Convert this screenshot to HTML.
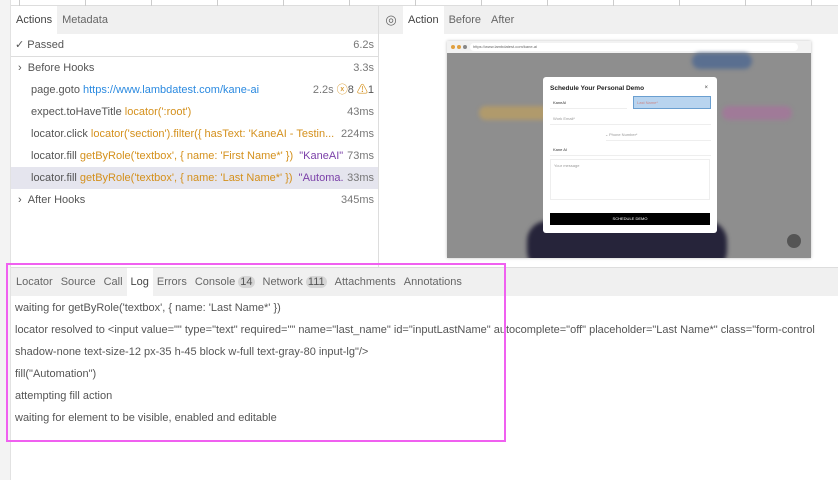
<!DOCTYPE html>
<html><head><meta charset="utf-8"><style>
*{box-sizing:border-box;margin:0;padding:0}
body{width:838px;height:480px;overflow:hidden;background:#fff;font-family:"Liberation Sans",sans-serif;font-size:11px;color:#555;position:relative}
.abs{position:absolute}
.rail{left:0;top:0;width:11px;height:480px;background:#f3f3f3;border-right:1px solid #e2e2e2}
.top{left:11px;top:0;width:827px;height:6px;border-bottom:1px solid #ddd;background:#fff}
.tick{position:absolute;top:0;width:1px;height:6px;background:#ccc}
.tabs{background:#f0f0f0;height:28px;display:flex;align-items:center}
.tab{padding:0 5px;height:28px;line-height:28px;color:#666}
.btabs .tab{padding:0 4px}
.tab.sel{background:#fff;color:#444}
.row{position:absolute;left:11px;width:367px;height:22px;line-height:22px;white-space:nowrap}
.row .t{position:absolute;right:4px;top:0;color:#777}
.o{color:#d4901c}.b{color:#2b8ae0}.p{color:#7a3fa8}
.log{position:absolute;left:15px;font-size:11px;color:#555;white-space:nowrap}
.badge{background:#d6d6d6;border-radius:7px;padding:0 2px;color:#555}
</style></head><body>
<div class="abs rail"></div>
<div class="abs top">
<div class="tick" style="left:8px"></div><div class="tick" style="left:74px"></div><div class="tick" style="left:140px"></div><div class="tick" style="left:206px"></div><div class="tick" style="left:272px"></div><div class="tick" style="left:338px"></div><div class="tick" style="left:404px"></div><div class="tick" style="left:470px"></div><div class="tick" style="left:536px"></div><div class="tick" style="left:602px"></div><div class="tick" style="left:668px"></div><div class="tick" style="left:734px"></div><div class="tick" style="left:800px"></div>
</div>
<div class="abs tabs" style="left:11px;top:6px;width:367px;padding-left:0"><div class="tab sel">Actions</div><div class="tab">Metadata</div></div>
<div class="row" style="top:34px;border-bottom:1px solid #ddd;height:23px"><span style="margin-left:4px;color:#555">✓</span> <span style="color:#555">Passed</span><span class="t">6.2s</span></div>
<div class="row" style="top:57px"><span style="margin-left:7px">›</span>&nbsp;&nbsp;Before Hooks<span class="t">3.3s</span></div>
<div class="row" style="top:79px"><span style="margin-left:20px">page.goto</span> <span class="b">https://www.lambdatest.com/kane-ai</span><span class="t">2.2s <span style="color:#d4901c">ⓧ</span><span style="color:#555">8</span> <span style="color:#d4901c">⚠</span><span style="color:#555">1</span></span></div>
<div class="row" style="top:101px"><span style="margin-left:20px">expect.toHaveTitle</span> <span class="o">locator(':root')</span><span class="t">43ms</span></div>
<div class="row" style="top:123px"><span style="margin-left:20px">locator.click</span> <span class="o">locator('section').filter({ hasText: 'KaneAI - Testin...</span><span class="t" style="background:#fff;padding-left:4px">224ms</span></div>
<div class="row" style="top:145px"><span style="margin-left:20px">locator.fill</span> <span class="o">getByRole('textbox', { name: 'First Name*' })</span>&nbsp; <span class="p">"KaneAI"</span><span class="t">73ms</span></div>
<div class="row" style="top:167px;background:#e5e5ee"><span style="margin-left:20px">locator.fill</span> <span class="o">getByRole('textbox', { name: 'Last Name*' })</span>&nbsp; <span class="p">"Automa...</span><span class="t" style="background:#e5e5ee;padding-left:3px">33ms</span></div>
<div class="row" style="top:189px"><span style="margin-left:7px">›</span>&nbsp;&nbsp;After Hooks<span class="t">345ms</span></div>
<div class="abs" style="left:378px;top:6px;width:1px;height:261px;background:#ddd"></div>
<div class="abs tabs" style="left:379px;top:6px;width:459px"><div style="width:24px;text-align:center;color:#666;font-size:13px">◎</div><div class="tab sel">Action</div><div class="tab">Before</div><div class="tab">After</div></div>
<div class="abs" style="left:447px;top:41px;width:364px;height:217px;box-shadow:0 0 3px rgba(0,0,0,.25);background:#8e8e8e;overflow:hidden">
 <div style="height:12px;background:#f2f2f2;position:relative;font-size:4px;line-height:12px">
  <span style="position:absolute;left:4px;top:4px;width:4px;height:4px;border-radius:2px;background:#e0a040"></span>
  <span style="position:absolute;left:10px;top:4px;width:4px;height:4px;border-radius:2px;background:#e0a040"></span>
  <span style="position:absolute;left:16px;top:4px;width:4px;height:4px;border-radius:2px;background:#888"></span>
  <span style="position:absolute;left:23px;top:2px;width:328px;height:8px;border-radius:4px;background:#fff;line-height:8px;padding-left:3px;color:#666">https://www.lambdatest.com/kane-ai</span>
 </div>
 <div style="position:absolute;left:32px;top:65px;width:70px;height:14px;border-radius:7px;background:#b09a6c;filter:blur(2px)"></div>
 <div style="position:absolute;left:275px;top:65px;width:70px;height:14px;border-radius:7px;background:#a07a98;filter:blur(2px)"></div>
 <div style="position:absolute;left:245px;top:12px;width:60px;height:16px;border-radius:8px;background:#5a6f90;filter:blur(2px)"></div>
 <div style="position:absolute;left:80px;top:180px;width:200px;height:50px;border-radius:20px;background:#26243a;filter:blur(2px)"></div>
 <div style="position:absolute;left:340px;top:193px;width:14px;height:14px;border-radius:7px;background:#555"></div>
 <div style="position:absolute;left:96px;top:36px;width:174px;height:156px;background:#fff;border-radius:3px;font-size:4px;color:#999">
  <div style="position:absolute;left:7px;top:8px;font-size:6.5px;font-weight:bold;color:#222">Schedule Your Personal Demo</div>
  <div style="position:absolute;right:9px;top:8px;font-size:6px;color:#444">×</div>
  <div style="position:absolute;left:7px;top:19px;width:77px;height:13px;border-bottom:1px solid #eee;line-height:13px;padding-left:3px;color:#333">KaneAI</div>
  <div style="position:absolute;left:90px;top:19px;width:78px;height:13px;background:#b8d4ef;border:1px solid #6a9fd0;line-height:11px;padding-left:3px;color:#c88">Last Name*</div>
  <div style="position:absolute;left:7px;top:35px;width:161px;height:13px;border-bottom:1px solid #eee;line-height:13px;padding-left:3px">Work Email*</div>
  <div style="position:absolute;left:62px;top:51px;line-height:13px">⌄</div>
  <div style="position:absolute;left:63px;top:51px;width:105px;height:13px;border-bottom:1px solid #eee;line-height:13px;padding-left:3px">Phone Number*</div>
  <div style="position:absolute;left:7px;top:66px;width:161px;height:13px;border-bottom:1px solid #eee;line-height:13px;padding-left:3px;color:#333">Kane AI</div>
  <div style="position:absolute;left:7px;top:82px;width:160px;height:41px;border:1px solid #eee;padding:3px">Your message</div>
  <div style="position:absolute;left:7px;top:136px;width:160px;height:12px;background:#000;color:#fff;text-align:center;line-height:12px">SCHEDULE DEMO</div>
 </div>
</div>
<div class="abs" style="left:11px;top:267px;width:827px;height:1px;background:#ddd"></div>
<div class="abs tabs btabs" style="left:11px;top:268px;width:827px;padding-left:1px"><div class="tab">Locator</div><div class="tab">Source</div><div class="tab">Call</div><div class="tab sel">Log</div><div class="tab">Errors</div><div class="tab">Console <span class="badge">14</span></div><div class="tab">Network <span class="badge">111</span></div><div class="tab">Attachments</div><div class="tab">Annotations</div></div>
<div class="log" style="top:302px">waiting for getByRole('textbox', { name: 'Last Name*' })</div>
<div class="log" style="top:324px">locator resolved to &lt;input value="" type="text" required="" name="last_name" id="inputLastName" autocomplete="off" placeholder="Last Name*" class="form-control</div>
<div class="log" style="top:346px">shadow-none text-size-12 px-35 h-45 block w-full text-gray-80 input-lg"/&gt;</div>
<div class="log" style="top:368px">fill("Automation")</div>
<div class="log" style="top:390px">attempting fill action</div>
<div class="log" style="top:412px">waiting for element to be visible, enabled and editable</div>
<div class="abs" style="left:6px;top:263px;width:500px;height:179px;border:2px solid #f060f0"></div>
</body></html>
